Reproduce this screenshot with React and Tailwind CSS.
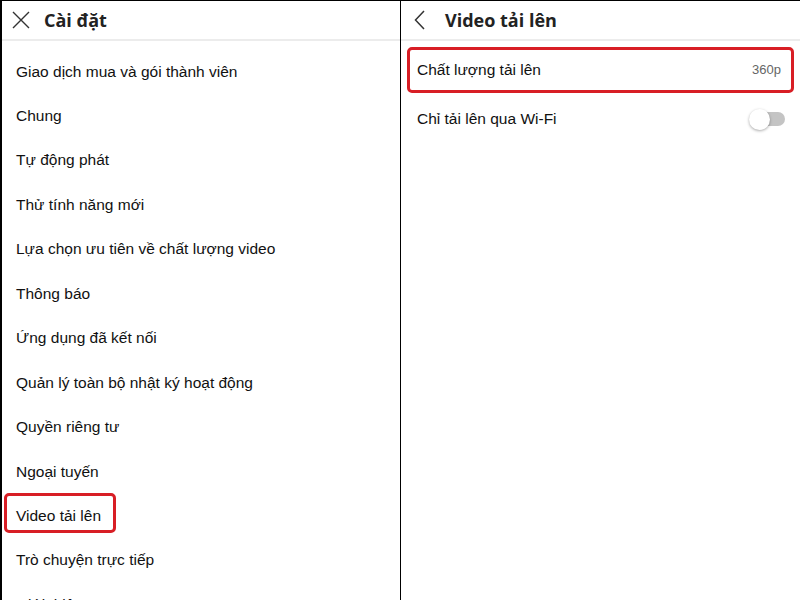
import React from "react";

const items = [
  "Giao dịch mua và gói thành viên",
  "Chung",
  "Tự động phát",
  "Thử tính năng mới",
  "Lựa chọn ưu tiên về chất lượng video",
  "Thông báo",
  "Ứng dụng đã kết nối",
  "Quản lý toàn bộ nhật ký hoạt động",
  "Quyền riêng tư",
  "Ngoại tuyến",
  "Video tải lên",
  "Trò chuyện trực tiếp",
  "Giới thiệu",
];

export default function App() {
  return (
    <div
      className="w-[800px] h-[600px] overflow-hidden bg-white flex border-t border-black text-[#111]"
      style={{ fontFamily: '"Liberation Sans", Arial, sans-serif' }}
    >
      <div className="w-[401px] h-full flex flex-col border-l-2 border-r border-black overflow-hidden">
        <div className="h-[40px] shrink-0 flex items-center border-b-2 border-[#ececec]">
          <svg width="18" height="18" viewBox="0 0 18 18" className="ml-[10px]">
            <path d="M1 1 L17 17 M17 1 L1 17" stroke="#333" strokeWidth="1.4" fill="none" />
          </svg>
          <span
            className="ml-[14px] text-[18px] font-bold text-[#222]"
            style={{ fontFamily: '"Open Sans", "Noto Sans", sans-serif' }}
          >
            Cài đặt
          </span>
        </div>
        <div className="pt-[8px] flex flex-col">
          {items.map((t) => (
            <div key={t} className="relative h-[44.45px] shrink-0 flex items-center pl-[14px] text-[15.5px]">
              {t}
              {t === "Video tải lên" && (
                <span className="absolute left-[2px] top-0 w-[112px] h-[40px] border-[3px] border-[#d81e25] rounded-[5px]" />
              )}
            </div>
          ))}
        </div>
      </div>
      <div className="flex-1 h-full flex flex-col">
        <div className="h-[40px] shrink-0 flex items-center border-b-2 border-[#ececec]">
          <svg width="12" height="20" viewBox="0 0 12 20" className="ml-[13px]">
            <path d="M10 1 L1.5 10 L10 19" stroke="#333" strokeWidth="1.5" fill="none" />
          </svg>
          <span
            className="ml-[19px] text-[18px] font-bold text-[#222]"
            style={{ fontFamily: '"Open Sans", "Noto Sans", sans-serif' }}
          >
            Video tải lên
          </span>
        </div>
        <div className="pt-[6px] flex flex-col">
          <div className="mx-[6px] h-[46px] flex items-center justify-between border-[3px] border-[#d81e25] rounded-[5px] pl-[7px] pr-[10px]">
            <span className="text-[15.5px]">Chất lượng tải lên</span>
            <span className="text-[13px] text-[#666]">360p</span>
          </div>
          <div className="h-[52px] flex items-center justify-between pl-[16px] pr-[15px]">
            <span className="text-[15.5px]">Chỉ tải lên qua Wi-Fi</span>
            <div className="relative w-[36px] h-[22px] flex items-center">
              <div className="absolute right-0 w-[30px] h-[14px] rounded-full bg-[#c4c4c4]" />
              <div className="absolute left-0 w-[21px] h-[21px] rounded-full bg-white shadow-[0_1px_3px_rgba(0,0,0,0.35)]" />
            </div>
          </div>
        </div>
      </div>
    </div>
  );
}
